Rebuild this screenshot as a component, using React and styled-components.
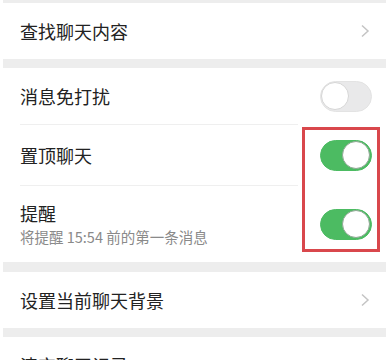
import styled, { createGlobalStyle } from "styled-components";

const GlobalStyle = createGlobalStyle`
    html, body {
        margin: 0;
        padding: 0;
        background: #ffffff;
    }
    body {
        font-family: "Noto Sans CJK SC", "Noto Sans", sans-serif;
        -webkit-font-smoothing: antialiased;
    }
`

const Page = styled.div`
    position: relative;
    width: 392px;
    height: 360px;
    overflow: hidden;
    box-sizing: border-box;
    padding: 0 6px 0 3px;
    background: #ffffff;
`

const Gap = styled.div`
    height: ${({ h }) => h}px;
    background: #ededed;
`

const Row = styled.div`
    height: ${({ h }) => h}px;
    display: flex;
    align-items: center;
    justify-content: space-between;
    padding: 0 14px 0 17px;
    background: #ffffff;
`

const Divider = styled.div`
    height: 1px;
    margin: 0 88px 0 17px;
    background: #efefef;
`

const Texts = styled.div`
    display: flex;
    flex-direction: column;
    gap: 4px;
`

const Title = styled.span`
    font-size: 18px;
    line-height: 22px;
    color: #222222;
`

const Sub = styled.span`
    font-size: 14.5px;
    line-height: 18px;
    color: #8a8a8a;
`

const Track = styled.div`
    position: relative;
    width: 52px;
    height: 31px;
    border-radius: 16px;
    box-sizing: border-box;
    background: ${({ on }) => (on ? "#4cbb62" : "#e9e9ea")};
    border: 1.5px solid ${({ on }) => (on ? "#4cbb62" : "#e3e3e3")};
`

const Knob = styled.div`
    position: absolute;
    top: 0;
    left: ${({ on }) => (on ? "21px" : "0")};
    width: 28px;
    height: 28px;
    border-radius: 50%;
    box-sizing: border-box;
    background: #ffffff;
    border: 1px solid ${({ on }) => (on ? "#8fa894" : "#d6d6d6")};
`

const Mark = styled.div`
    position: absolute;
    left: 302px;
    top: 127px;
    width: 78px;
    height: 125px;
    border: 3px solid #d9474c;
    box-sizing: border-box;
`

function Toggle({ on }) {
    return (
        <Track on={on ? 1 : 0}>
            <Knob on={on ? 1 : 0} />
        </Track>
    )
}

function Chevron() {
    return (
        <svg width="10" height="14" viewBox="0 0 10 14" style={{ marginRight: 2 }}>
            <polyline points="2,1.5 8,7 2,12.5" fill="none" stroke="#c4c4c4" strokeWidth="1.5" />
        </svg>
    )
}

export default function App() {
    return (
        <>
            <GlobalStyle />
            <Page>
                <Gap h={3} />
                <Row h={56}>
                    <Title>查找聊天内容</Title>
                    <Chevron />
                </Row>
                <Gap h={9} />
                <Row h={56}>
                    <Title>消息免打扰</Title>
                    <Toggle />
                </Row>
                <Divider />
                <Row h={60}>
                    <Title>置顶聊天</Title>
                    <Toggle on />
                </Row>
                <Divider />
                <Row h={76}>
                    <Texts>
                        <Title>提醒</Title>
                        <Sub>将提醒 15:54 前的第一条消息</Sub>
                    </Texts>
                    <Toggle on />
                </Row>
                <Gap h={10} />
                <Row h={56}>
                    <Title>设置当前聊天背景</Title>
                    <Chevron />
                </Row>
                <Gap h={9} />
                <Row h={56}>
                    <Title>清空聊天记录</Title>
                </Row>
                <Mark />
            </Page>
        </>
    )
}
